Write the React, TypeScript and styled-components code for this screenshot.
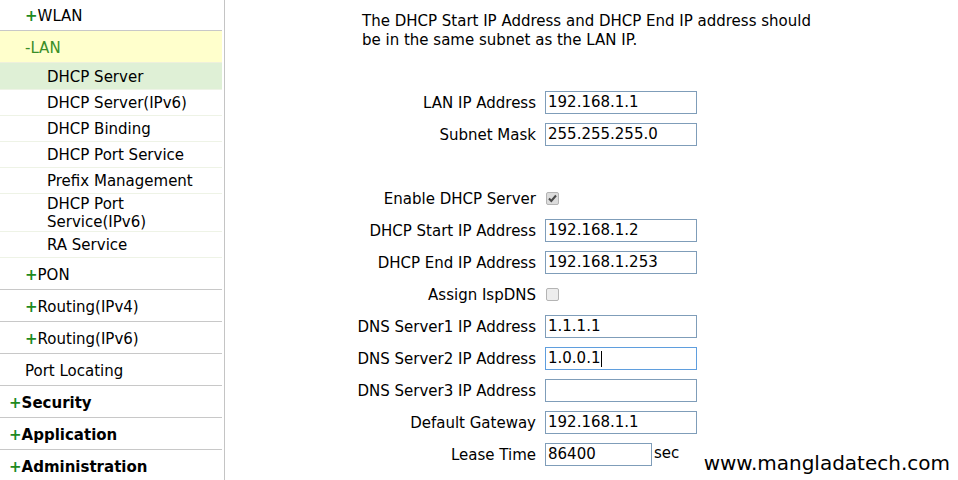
import React from "react";
import styled, { createGlobalStyle } from "styled-components";

const Global = createGlobalStyle`
  html, body { margin: 0; padding: 0; background: #fff; }
  body {
    font-family: "DejaVu Sans", Verdana, sans-serif;
    font-size: 15px;
    color: #000;
  }
`;

const Page = styled.div`
  position: relative;
  display: flex;
  height: 480px;
  overflow: hidden;
`;

const Sidebar = styled.nav`
  flex-shrink: 0;
  width: 222px;
  padding-right: 2px;
  border-right: 1px solid #c4c4c4;
  display: flex;
  flex-direction: column;
`;

const NavItem = styled.div<{ $level: 1 | 2; $bold?: boolean; $open?: boolean; $height?: number }>`
  box-sizing: border-box;
  height: ${(p) => p.$height ?? 32}px;
  flex-shrink: 0;
  display: flex;
  align-items: center;
  padding: 2px 0 0 ${(p) => (p.$level === 1 ? 9 : 25)}px;
  border-bottom: 1px solid ${(p) => (p.$open ? "#eef0dc" : "#c8c8c8")};
  background: ${(p) => (p.$open ? "#ffffcc" : "transparent")};
  font-weight: ${(p) => (p.$bold ? 700 : 400)};
  color: ${(p) => (p.$open ? "#3a8e28" : "#000")};
  white-space: nowrap;
`;

const Sign = styled.span`
  color: #1f8a1f;
  font-weight: 700;
`;

const SubItem = styled.div<{ $selected?: boolean }>`
  box-sizing: border-box;
  flex-shrink: 0;
  min-height: ${(p) => (p.$selected ? 27 : 26)}px;
  display: flex;
  align-items: center;
  padding: 1px 20px 0 47px;
  line-height: 18px;
  border-bottom: 1px solid #eef3e6;
  background: ${(p) => (p.$selected ? "#dff0d6" : "transparent")};
`;

const Main = styled.main`
  flex: 1;
`;

const Note = styled.p`
  margin: 12px 0 0 137px;
  line-height: 19px;
  white-space: nowrap;
`;

const Form = styled.div`
  margin-top: 36px;
  display: grid;
  grid-template-columns: 311px auto;
  column-gap: 9px;
  grid-auto-rows: 32px;
  align-items: center;
`;

const Label = styled.div`
  text-align: right;
  white-space: nowrap;
  padding-top: 1px;
`;

const Field = styled.div`
  display: flex;
  align-items: center;
`;

const Input = styled.input<{ $width?: number; $focused?: boolean }>`
  box-sizing: border-box;
  width: ${(p) => p.$width ?? 152}px;
  height: 23px;
  margin: 0;
  padding: 0 2px;
  border: 1px solid ${(p) => (p.$focused ? "#5f9ede" : "#7f9db9")};
  outline: none;
  font-family: "DejaVu Sans", Verdana, sans-serif;
  font-size: 15px;
  color: #000;
  background: #fff;
`;

const CaretWrap = styled.div`
  position: relative;
  display: inline-block;
`;

const Caret = styled.span`
  position: absolute;
  left: 56px;
  top: 4px;
  width: 1px;
  height: 16px;
  background: #000;
`;

const Unit = styled.span`
  margin-left: 2px;
  margin-top: -3px;
`;

const Box = styled.span<{ $checked?: boolean }>`
  box-sizing: border-box;
  margin-left: 1px;
  width: 13px;
  height: 13px;
  border: 1px solid #b4b4b4;
  border-radius: 2px;
  background: ${(p) => (p.$checked ? "#dcdcdc" : "#ededed")};
  display: flex;
  align-items: center;
  justify-content: center;
`;

const Watermark = styled.div`
  position: absolute;
  right: 8px;
  top: 451px;
  font-size: 20px;
  line-height: 24px;
  color: #000;
`;

const Check = () => (
  <svg width="11" height="11" viewBox="0 0 11 11">
    <path d="M2 5.5 L4.3 8 L9 2.5" fill="none" stroke="#4a4a4a" strokeWidth="2" />
  </svg>
);

type Row =
  | { kind: "input"; label: string; value: string; width?: number; unit?: string; focused?: boolean }
  | { kind: "check"; label: string; checked: boolean }
  | { kind: "empty" };

const rows: Row[] = [
  { kind: "input", label: "LAN IP Address", value: "192.168.1.1" },
  { kind: "input", label: "Subnet Mask", value: "255.255.255.0" },
  { kind: "empty" },
  { kind: "check", label: "Enable DHCP Server", checked: true },
  { kind: "input", label: "DHCP Start IP Address", value: "192.168.1.2" },
  { kind: "input", label: "DHCP End IP Address", value: "192.168.1.253" },
  { kind: "check", label: "Assign IspDNS", checked: false },
  { kind: "input", label: "DNS Server1 IP Address", value: "1.1.1.1" },
  { kind: "input", label: "DNS Server2 IP Address", value: "1.0.0.1", focused: true },
  { kind: "input", label: "DNS Server3 IP Address", value: "" },
  { kind: "input", label: "Default Gateway", value: "192.168.1.1" },
  { kind: "input", label: "Lease Time", value: "86400", width: 107, unit: "sec" },
];

const subItems = [
  "DHCP Server",
  "DHCP Server(IPv6)",
  "DHCP Binding",
  "DHCP Port Service",
  "Prefix Management",
  "DHCP Port Service(IPv6)",
  "RA Service",
];

export default function App() {
  return (
    <>
      <Global />
      <Page>
        <Sidebar>
          <NavItem $level={2} $height={31}>
            <Sign>+</Sign>WLAN
          </NavItem>
          <NavItem $level={2} $open>
            -LAN
          </NavItem>
          {subItems.map((s, i) => (
            <SubItem key={s} $selected={i === 0}>
              {s}
            </SubItem>
          ))}
          <NavItem $level={2}>
            <Sign>+</Sign>PON
          </NavItem>
          <NavItem $level={2}>
            <Sign>+</Sign>Routing(IPv4)
          </NavItem>
          <NavItem $level={2}>
            <Sign>+</Sign>Routing(IPv6)
          </NavItem>
          <NavItem $level={2}>Port Locating</NavItem>
          <NavItem $level={1} $bold>
            <Sign>+</Sign>Security
          </NavItem>
          <NavItem $level={1} $bold>
            <Sign>+</Sign>Application
          </NavItem>
          <NavItem $level={1} $bold>
            <Sign>+</Sign>Administration
          </NavItem>
        </Sidebar>
        <Main>
          <Note>
            The DHCP Start IP Address and DHCP End IP address should
            <br />
            be in the same subnet as the LAN IP.
          </Note>
          <Form>
            {rows.map((r, i) => {
              if (r.kind === "empty")
                return (
                  <React.Fragment key={i}>
                    <Label />
                    <Field />
                  </React.Fragment>
                );
              if (r.kind === "check")
                return (
                  <React.Fragment key={i}>
                    <Label>{r.label}</Label>
                    <Field>
                      <Box $checked={r.checked}>{r.checked && <Check />}</Box>
                    </Field>
                  </React.Fragment>
                );
              return (
                <React.Fragment key={i}>
                  <Label>{r.label}</Label>
                  <Field>
                    {r.focused ? (
                      <CaretWrap>
                        <Input $focused defaultValue={r.value} />
                        <Caret />
                      </CaretWrap>
                    ) : (
                      <Input $width={r.width} defaultValue={r.value} />
                    )}
                    {r.unit && <Unit>{r.unit}</Unit>}
                  </Field>
                </React.Fragment>
              );
            })}
          </Form>
        </Main>
        <Watermark>www.mangladatech.com</Watermark>
      </Page>
    </>
  );
}
